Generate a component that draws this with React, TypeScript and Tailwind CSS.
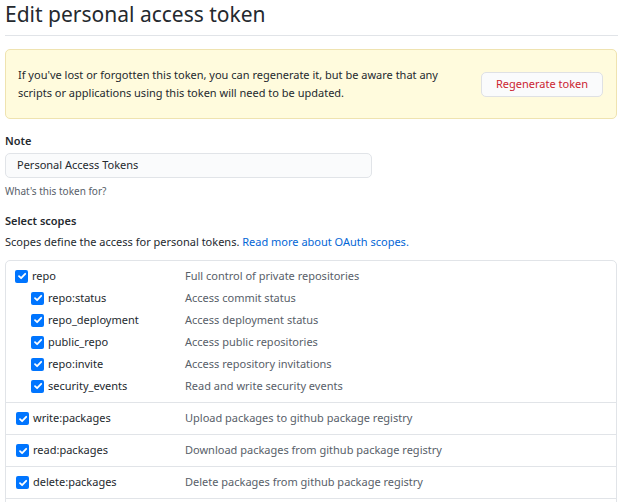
import React from "react";

const Check = () => (
  <span className="flex h-[13px] w-[13px] shrink-0 items-center justify-center rounded-[2px] bg-[#0075ff]">
    <svg width="10" height="10" viewBox="0 0 10 10" fill="none">
      <path d="M2 5.2 L4.1 7.2 L8.2 2.8" stroke="white" strokeWidth="1.8" strokeLinecap="round" strokeLinejoin="round" />
    </svg>
  </span>
);

type RowProps = { name: string; desc: string; sub?: boolean };

const Row = ({ name, desc, sub }: RowProps) => (
  <div className="flex h-[22px] items-center">
    <div className={`flex w-[179px] shrink-0 items-center gap-[4px] ${sub ? "pl-[25px]" : "pl-[9px]"}`}>
      <Check />
      <span className="text-[11px] text-[#24292e]">{name}</span>
    </div>
    <span className="text-[11px] text-[#586069]">{desc}</span>
  </div>
);

const PkgRow = ({ name, desc }: { name: string; desc: string }) => (
  <div className="flex h-[32px] items-center border-t border-[#e1e4e8]">
    <div className="flex w-[179px] shrink-0 items-center gap-[4px] pl-[10px]">
      <Check />
      <span className="text-[11px] text-[#24292e]">{name}</span>
    </div>
    <span className="text-[11px] text-[#586069]">{desc}</span>
  </div>
);

export default function App() {
  return (
    <div
      className="h-[502px] w-[623px] overflow-hidden bg-white pl-[5px] pr-[5px] text-[#24292e]"
      style={{ fontFamily: '"Noto Sans", "Open Sans", sans-serif' }}
    >
      <div className="flex h-[36px] items-center border-b border-[#e1e4e8] pb-[6px]">
        <h2 className="text-[21px] font-normal leading-none text-[#24292e]">Edit personal access token</h2>
      </div>
      <div className="mt-[13px] mr-[1px] flex h-[70px] items-center justify-between rounded-[5px] border border-[#efe3b0] bg-[#fffbdd] pl-[12px] pr-[13px]">
        <p className="text-[11px] leading-[18px] text-[#24292e]">
          If you've lost or forgotten this token, you can regenerate it, but be aware that any
          <br />
          scripts or applications using this token will need to be updated.
        </p>
        <button className="h-[25px] w-[122px] rounded-[5px] border border-[#dfe1e4] bg-[#fafbfc] text-[11px] text-[#cb2431]">
          Regenerate token
        </button>
      </div>
      <div className="mt-[14px] text-[11px] font-semibold leading-[16px]">Note</div>
      <div className="mt-[4px] flex h-[25px] w-[367px] items-center rounded-[5px] border border-[#e1e4e8] bg-[#fafbfc] pl-[11px] text-[11px]">
        Personal Access Tokens
      </div>
      <div className="mt-[5px] text-[10px] leading-[16px] text-[#586069]">What's this token for?</div>
      <div className="mt-[14px] text-[11px] font-semibold leading-[16px]">Select scopes</div>
      <div className="mt-[5px] text-[11px] leading-[16px]">
        Scopes define the access for personal tokens.{" "}
        <span className="text-[#0366d6]">Read more about OAuth scopes.</span>
      </div>
      <div className="mt-[10px] mr-[1px] rounded-[5px] border border-[#e1e4e8]">
        <div className="pt-[4px] pb-[5px]">
          <Row name="repo" desc="Full control of private repositories" />
          <Row name="repo:status" desc="Access commit status" sub />
          <Row name="repo_deployment" desc="Access deployment status" sub />
          <Row name="public_repo" desc="Access public repositories" sub />
          <Row name="repo:invite" desc="Access repository invitations" sub />
          <Row name="security_events" desc="Read and write security events" sub />
        </div>
        <PkgRow name="write:packages" desc="Upload packages to github package registry" />
        <PkgRow name="read:packages" desc="Download packages from github package registry" />
        <PkgRow name="delete:packages" desc="Delete packages from github package registry" />
        <div className="h-[40px] border-t border-[#e1e4e8]" />
      </div>
    </div>
  );
}
